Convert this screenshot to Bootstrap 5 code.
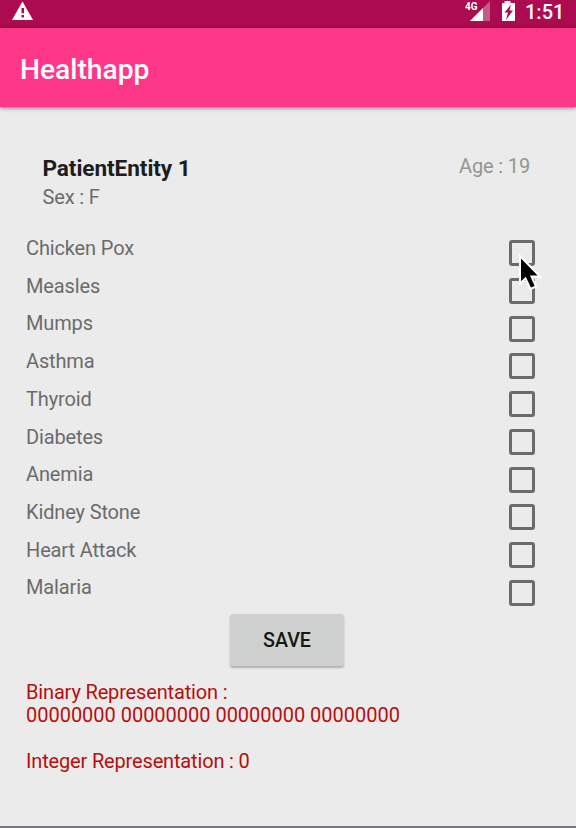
<!DOCTYPE html>
<html lang="en">
<head>
<meta charset="utf-8">
<meta name="viewport" content="width=device-width, initial-scale=1">
<title>Healthapp</title>
<link href="https://cdn.jsdelivr.net/npm/bootstrap@5.3.0/dist/css/bootstrap.min.css" rel="stylesheet">
<style>
body{font-family:Roboto,"Liberation Sans",sans-serif;font-size:20px;line-height:23px;background:#ebebeb;color:#6b6b6b}
.screen{height:828px;border-bottom:2px solid #77787b}
.status{height:28px;background:#ac0c4f;padding:0 13px 4px 11px}
.clock{font-size:20px;font-weight:500;line-height:24px;width:38px}
.appbar{height:79px;background:#ff3789;padding:5px 20px 0;box-shadow:0 1px 4px rgba(0,0,0,.5)}
.app-title{font-size:28.2px;font-weight:500;line-height:36px}
.patient{padding:48px 46px 0 42.5px;height:130px;letter-spacing:-.15px}
.patient-name{font-size:22.6px;font-weight:700;line-height:28px;letter-spacing:-.08px;color:#1d1d1d}
.sex{margin-top:3px}
.age{color:#949494}
.conditions{padding:0 41px 0 26px;letter-spacing:-.14px}
.condition{height:37.73px}
.tick{width:26px;height:26px;margin:3.200px 0 0;border:3px solid #6b6b6b!important;border-radius:3px!important;background:transparent}
.save{width:114px;height:52px;margin-right:2px;padding:1px 0 0;background:#cfd1d0;color:#161616;font-size:19.7px;font-weight:500;border-radius:3px;box-shadow:0 2px 2px rgba(0,0,0,.25)}
.output{padding:15.200px 26px 0;color:#b90d0d}
.caption{letter-spacing:-.16px}
.digits{letter-spacing:-.02px}
.gap-line{margin-top:22.500px}
.pointer{left:516px;top:253px}
</style>
</head>
<body>
<div class="screen position-relative overflow-hidden d-flex flex-column">
  <header>
    <div class="status d-flex align-items-center justify-content-between text-white">
      <svg width="24" height="24" viewBox="0 0 24 24"><path d="M11.5 1.5 22 20H1Z" fill="#fff"/><path d="M10.5 8h2.5v5.2h-2.5zM10.5 15h2.5v2.5h-2.5z" fill="#ac0c4f"/></svg>
      <div class="d-flex align-items-center">
        <svg width="26" height="24" viewBox="0 0 26 24"><path d="M25 1v20H5Z" fill="#fff" opacity=".32"/><path d="M18 8v13H5Z" fill="#fff"/><text x="0" y="10" font-size="11.5" font-weight="700" fill="#fff" textLength="12.5" lengthAdjust="spacingAndGlyphs">4G</text></svg>
        <svg class="ms-2" width="18" height="24" viewBox="0 0 18 24"><path d="M5.500 3V1h6v2H15q1 0 1 1v17H3V4q0-1 1-1Z" fill="#fff"/><path d="M12 4.500 5.500 12.500h3.500l-2 7.500 7-9.500H10.500Z" fill="#ac0c4f"/></svg>
        <span class="clock ms-2">1:51</span>
      </div>
    </div>
    <div class="appbar d-flex align-items-center text-white"><h1 class="app-title mb-0">Healthapp</h1></div>
  </header>
  <main>
    <section class="patient d-flex justify-content-between align-items-start">
      <div><h2 class="patient-name mb-0">PatientEntity 1</h2><div class="sex">Sex : F</div></div>
      <div class="age">Age : 19</div>
    </section>
    <section class="conditions">
      <label class="condition d-flex justify-content-between align-items-start">Chicken Pox<input class="form-check-input tick" type="checkbox"></label>
      <label class="condition d-flex justify-content-between align-items-start">Measles<input class="form-check-input tick" type="checkbox"></label>
      <label class="condition d-flex justify-content-between align-items-start">Mumps<input class="form-check-input tick" type="checkbox"></label>
      <label class="condition d-flex justify-content-between align-items-start">Asthma<input class="form-check-input tick" type="checkbox"></label>
      <label class="condition d-flex justify-content-between align-items-start">Thyroid<input class="form-check-input tick" type="checkbox"></label>
      <label class="condition d-flex justify-content-between align-items-start">Diabetes<input class="form-check-input tick" type="checkbox"></label>
      <label class="condition d-flex justify-content-between align-items-start">Anemia<input class="form-check-input tick" type="checkbox"></label>
      <label class="condition d-flex justify-content-between align-items-start">Kidney Stone<input class="form-check-input tick" type="checkbox"></label>
      <label class="condition d-flex justify-content-between align-items-start">Heart Attack<input class="form-check-input tick" type="checkbox"></label>
      <label class="condition d-flex justify-content-between align-items-start">Malaria<input class="form-check-input tick" type="checkbox"></label>
    </section>
    <div class="d-flex justify-content-center"><button class="btn save border-0" type="button">SAVE</button></div>
    <section class="output">
      <div class="caption">Binary Representation :</div>
      <div class="digits">00000000 00000000 00000000 00000000</div>
      <div class="caption gap-line">Integer Representation : 0</div>
    </section>
  </main>
  <svg class="pointer position-absolute" width="28" height="40" viewBox="0 0 28 40"><path d="M4 3V30.500L9.500 25.500 14.500 36 20 33.500 15.500 23.500H24Z" fill="#000" stroke="#fff" stroke-width="2"/></svg>
</div>
<script src="https://cdn.jsdelivr.net/npm/bootstrap@5.3.0/dist/js/bootstrap.bundle.min.js"></script>
</body>
</html>
